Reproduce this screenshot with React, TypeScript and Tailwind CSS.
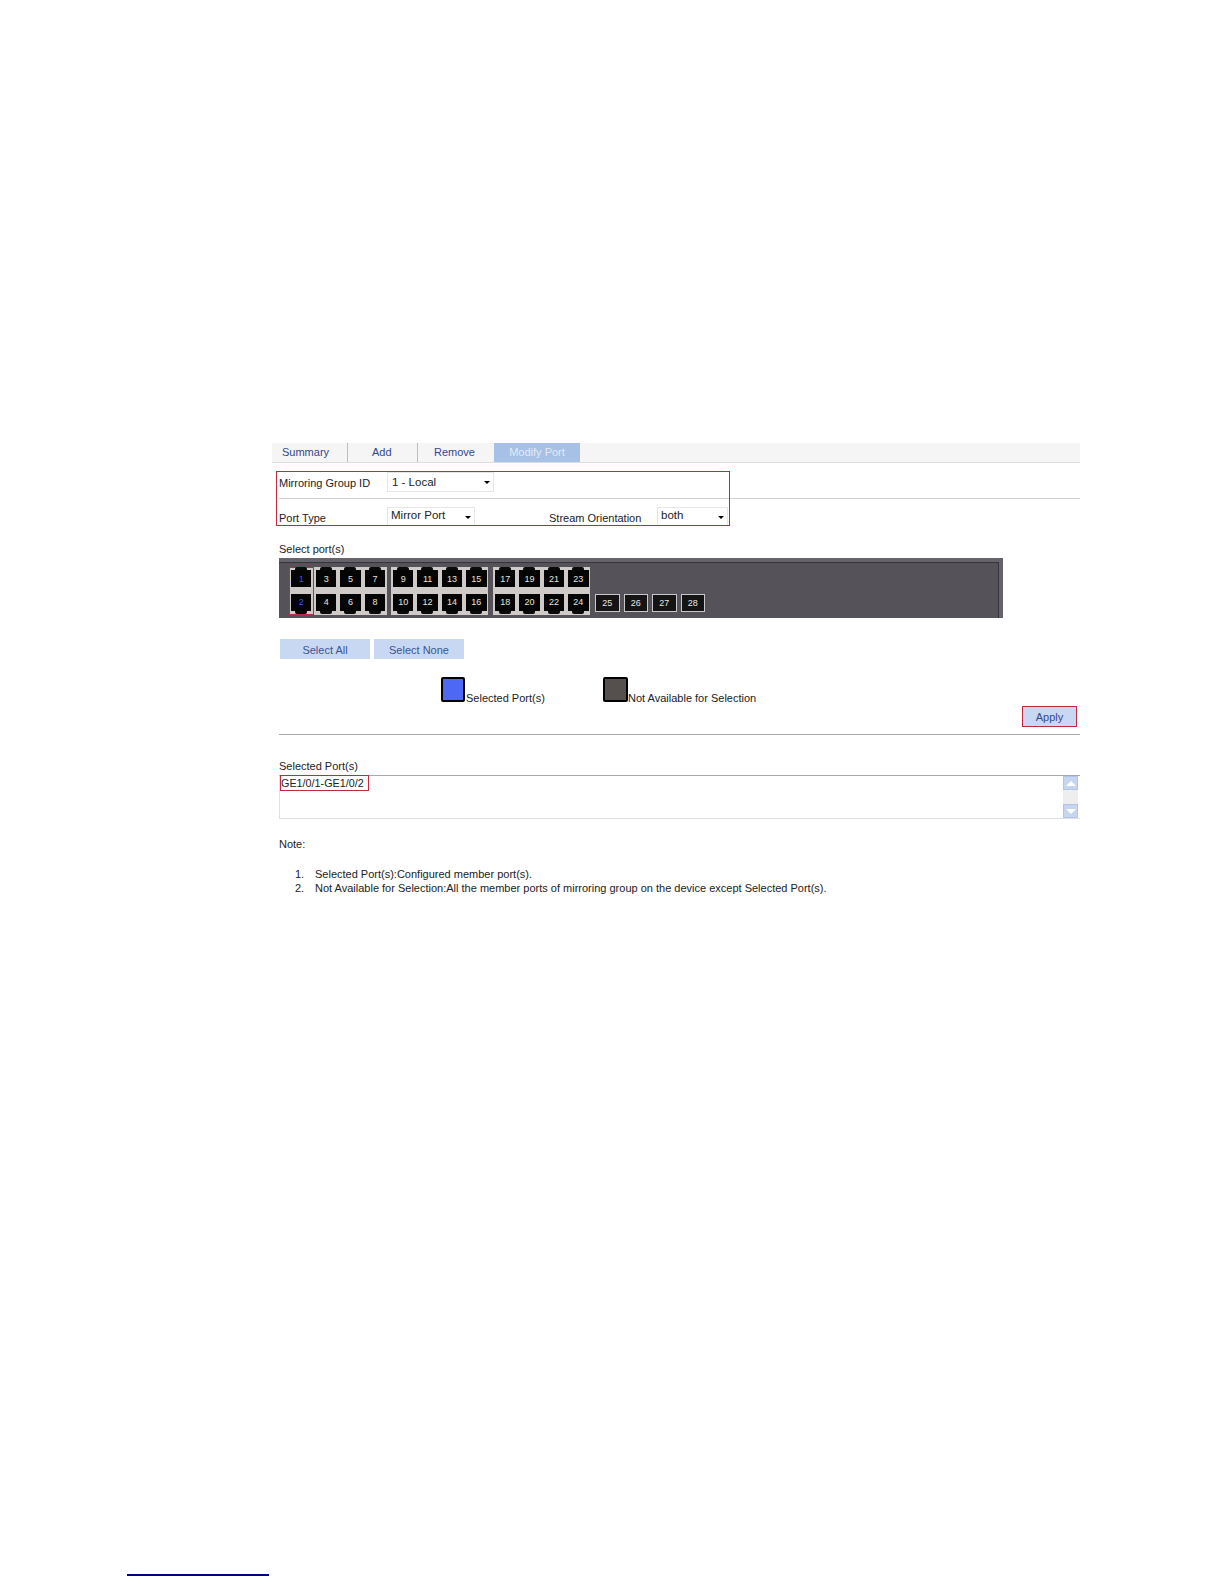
import React from 'react';

const font = { fontFamily: '"Liberation Sans", Arial, sans-serif' };

const groups = [
    [[3, 4], [5, 6], [7, 8]],
    [[9, 10], [11, 12], [13, 14], [15, 16]],
    [[17, 18], [19, 20], [21, 22], [23, 24]],
];

const Port = ({ n, selected = false }: { n: number; selected?: boolean }) => {
    const isTop = n % 2 === 1;
    return (
        <div className={`relative w-[20.4px] h-[17px] bg-[#050505] flex items-center justify-center text-[9px] leading-none ${isTop ? 'pt-[2px]' : ''} ${selected ? 'text-[#3c58d8]' : 'text-[#e8e4d8]'}`}>
            <div className={`absolute left-[4px] w-[12px] h-[3px] bg-[#0a0a0a] ${isTop ? 'top-[-3px] rounded-t-[2px]' : 'bottom-[-3px] rounded-b-[2px]'}`} />
            {n}
        </div>
    );
};

const PortColumn = ({ pair }: { pair: number[] }) => (
    <div className="flex flex-col gap-[7px]">
        <Port n={pair[0]} />
        <Port n={pair[1]} />
    </div>
);

const Sfp = ({ n }: { n: number }) => (
    <div className="w-[24.5px] h-[18px] bg-[#141414] border border-[#c8c8c8] flex items-center justify-center text-[9px] leading-none text-[#e8e8e8]">
        {n}
    </div>
);

const Select = ({ value, className, arrow }: { value: string; className: string; arrow: string }) => (
    <div className={`relative border border-[#e6e6e6] bg-white text-[#222] text-[11.5px] leading-none flex items-start ${className}`}>
        {value}
        <div className={`absolute top-[8px] w-0 h-0 border-l-[3px] border-r-[3px] border-t-[3px] border-l-transparent border-r-transparent border-t-black ${arrow}`} />
    </div>
);

const ScrollBtn = ({ up }: { up: boolean }) => (
    <div className="w-[15px] h-[14px] bg-[#c6d5f2] border border-[#b4c4e4] flex items-center justify-center">
        <div className={`w-0 h-0 border-l-[5px] border-r-[5px] border-l-transparent border-r-transparent ${up ? 'border-b-[5px] border-b-white' : 'border-t-[5px] border-t-white'}`} />
    </div>
);

const App: React.FC = () => {
    return (
        <div className="relative w-[1224px] h-[1584px] bg-white overflow-hidden text-[11px] text-[#333]" style={font}>
            <div className="pt-[443px] pl-[272px] w-[1080px]">
                {/* tabs */}
                <div className="flex h-[20px] bg-[#f5f5f5] border-b border-[#dcdcdc] text-[11px] text-[#33478c]">
                    <div className="w-[76px] pl-[10px] pt-[1px] border-r border-[#bdbdbd]">Summary</div>
                    <div className="w-[70px] pl-[24px] pt-[1px] border-r border-[#bdbdbd]">Add</div>
                    <div className="w-[76px] pl-[16px] pt-[1px]">Remove</div>
                    <div className="w-[86px] bg-[#a6c0e6] text-[#e4eaf4] text-center pt-[1px]">Modify Port</div>
                </div>

                {/* form rows, red box lies over them */}
                <div className="relative">
                    <div className="absolute z-10 left-[4px] top-[8px] w-[454px] h-[55px] border border-[#c4283c] pointer-events-none" />
                    <div className="ml-[7px] pt-[9px] h-[36px] border-b border-[#cfcfcf] flex">
                        <div className="w-[108px] pt-[3px] text-[#222]">Mirroring Group ID</div>
                        <Select value="1 - Local" className="w-[107px] h-[20px] pt-[4px] pl-[4px]" arrow="right-[3px]" />
                    </div>
                    <div className="ml-[7px] pt-[8px] flex h-[27px]">
                        <div className="w-[108px] pt-[3px] text-[#222]">Port Type</div>
                        <Select value="Mirror Port" className="w-[88px] h-[19px] pt-[2px] pl-[3px]" arrow="right-[3px]" />
                        <div className="ml-[74px] w-[108px] pt-[3px] text-[#222]">Stream Orientation</div>
                        <Select value="both" className="w-[71px] h-[19px] pt-[2px] pl-[3px]" arrow="right-[3px]" />
                    </div>
                </div>

                <div className="ml-[8px]">
                    <div className="mt-[17px] ml-[-1px] h-[13px] leading-[13px] text-[#222]">Select port(s)</div>

                    {/* switch panel */}
                    <div className="mt-[2px] ml-[-1px] w-[724px] h-[60px] bg-[#66646a] pt-[4px] pr-[4px]">
                        <div className="h-[56px] bg-[#55525a] border-t border-r border-[#36343a] pl-[10px] pt-[4px] flex items-start">
                            <div className="h-[48px] w-[98px] bg-[#cfcac8] flex items-start">
                                <div className="h-[48px] w-[25px] border border-[#c4283c] pt-[2px] pl-[1px] flex flex-col gap-[7px]">
                                    <Port n={1} selected />
                                    <Port n={2} selected />
                                </div>
                                <div className="flex gap-[4px] pl-[2px] pt-[3px]">
                                    {groups[0].map(p => <PortColumn key={p[0]} pair={p} />)}
                                </div>
                            </div>
                            {groups.slice(1).map((g, i) => (
                                <div key={i} className={`h-[48px] w-[97px] bg-[#cfcac8] flex gap-[4px] pl-[2px] pt-[3px] ${i === 0 ? 'ml-[4px]' : 'ml-[5px]'}`}>
                                    {g.map(p => <PortColumn key={p[0]} pair={p} />)}
                                </div>
                            ))}
                            <div className="ml-[5px] mt-[27px] flex gap-[4px]">
                                {[25, 26, 27, 28].map(n => <Sfp key={n} n={n} />)}
                            </div>
                        </div>
                    </div>

                    {/* select buttons */}
                    <div className="mt-[21px] flex gap-[4px] text-[#3a5494]">
                        <div className="w-[90px] h-[20px] pt-[2px] bg-[#c9d8f2] flex items-center justify-center">Select All</div>
                        <div className="w-[90px] h-[20px] pt-[2px] bg-[#c9d8f2] flex items-center justify-center">Select None</div>
                    </div>

                    {/* legend */}
                    <div className="mt-[18px] ml-[161px] flex items-end h-[25px] text-[#222]">
                        <div className="w-[24px] h-[25px] bg-[#4c68f4] border-2 border-black rounded-[2px]" />
                        <div className="ml-[1px] mb-[-2px] w-[136px] leading-[12px]">Selected Port(s)</div>
                        <div className="ml-[1px] w-[25px] h-[25px] bg-[#55504e] border-2 border-black rounded-[2px]" />
                        <div className="mb-[-2px] leading-[12px]">Not Available for Selection</div>
                    </div>

                    <div className="mt-[4px] ml-[742px] w-[55px] h-[21px] pt-[2px] bg-[#c9d8f2] border border-[#c4283c] text-[#33478c] flex items-center justify-center">Apply</div>

                    <div className="mt-[7px] ml-[-1px] h-0 border-t border-[#a8a8a8]" />

                    <div className="mt-[25px] ml-[-1px] h-[13px] leading-[13px] text-[#222]">Selected Port(s)</div>

                    {/* selected ports box */}
                    <div className="mt-[2px] ml-[-1px] h-[44px] border-t border-l border-b border-t-[#aaaaaa] border-l-[#e0e0e0] border-b-[#e0e0e0] flex justify-between">
                        <div className="mt-[-1px] w-[89px] h-[16px] border border-[#c4283c] text-[#222] text-[10.8px] flex items-center">GE1/0/1-GE1/0/2</div>
                        <div className="w-[15px] mr-[2px] bg-[#eeeeee] flex flex-col justify-between">
                            <ScrollBtn up />
                            <ScrollBtn up={false} />
                        </div>
                    </div>

                    <div className="mt-[19px] ml-[-1px] h-[13px] leading-[13px] text-[#222]">Note:</div>

                    <ol className="mt-[16px] text-[#222]">
                        <li className="flex h-[14px] leading-[14px]">
                            <span className="ml-[15px] w-[20px]">1.</span>
                            <span>Selected Port(s):Configured member port(s).</span>
                        </li>
                        <li className="flex h-[14px] leading-[14px]">
                            <span className="ml-[15px] w-[20px]">2.</span>
                            <span>Not Available for Selection:All the member ports of mirroring group on the device except Selected Port(s).</span>
                        </li>
                    </ol>
                </div>
            </div>

            {/* footnote rule */}
            <div className="absolute left-[127px] top-[1574px] w-[142px] h-[2px] bg-[#000080]" />
        </div>
    );
};

export default App;
